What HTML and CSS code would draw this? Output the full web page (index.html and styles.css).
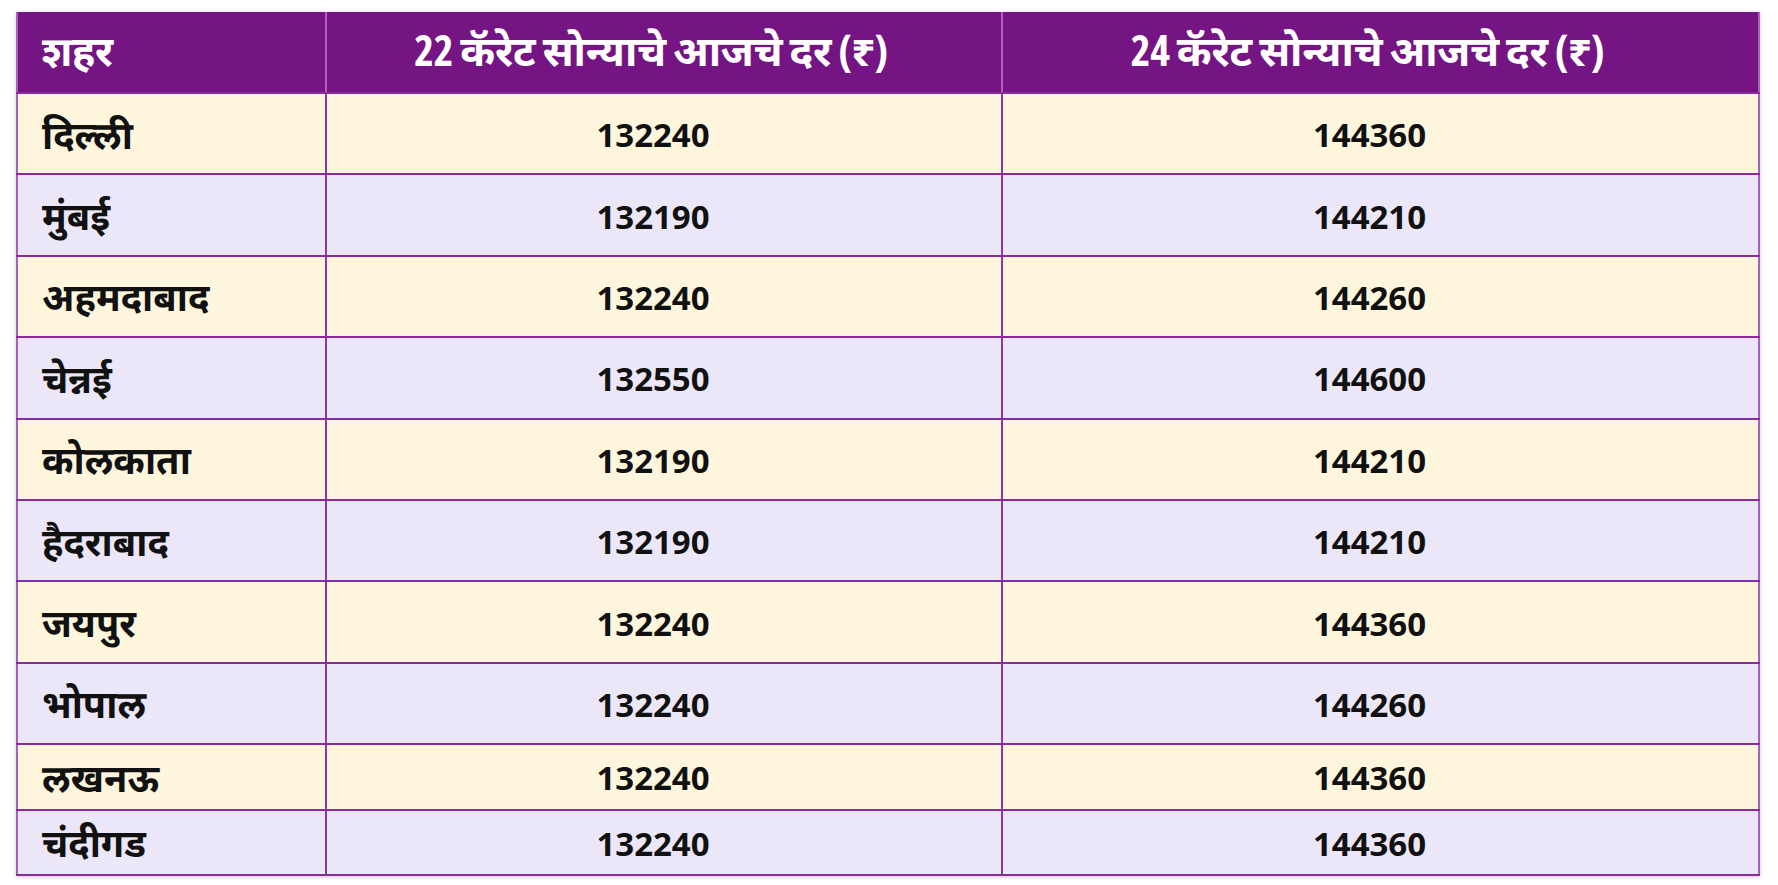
FILE: index.html
```html
<!DOCTYPE html>
<html lang="mr">
<head>
<meta charset="utf-8">
<title>सोन्याचे आजचे दर</title>
<link rel="stylesheet" href="styles.css">
</head>
<body>
<div class="page">
  <table class="rates">
    <colgroup>
      <col class="c-city">
      <col class="c-22">
      <col class="c-24">
    </colgroup>
    <thead>
      <tr>
        <th class="city">शहर</th>
        <th>22 कॅरेट सोन्याचे आजचे दर (₹)</th>
        <th>24 कॅरेट सोन्याचे आजचे दर (₹)</th>
      </tr>
    </thead>
    <tbody>
      <tr class="odd"><td class="city">दिल्ली</td><td>132240</td><td>144360</td></tr>
      <tr class="even"><td class="city">मुंबई</td><td>132190</td><td>144210</td></tr>
      <tr class="odd"><td class="city">अहमदाबाद</td><td>132240</td><td>144260</td></tr>
      <tr class="even"><td class="city">चेन्नई</td><td>132550</td><td>144600</td></tr>
      <tr class="odd"><td class="city">कोलकाता</td><td>132190</td><td>144210</td></tr>
      <tr class="even"><td class="city">हैदराबाद</td><td>132190</td><td>144210</td></tr>
      <tr class="odd"><td class="city">जयपुर</td><td>132240</td><td>144360</td></tr>
      <tr class="even"><td class="city">भोपाल</td><td>132240</td><td>144260</td></tr>
      <tr class="odd short"><td class="city">लखनऊ</td><td>132240</td><td>144360</td></tr>
      <tr class="even short"><td class="city">चंदीगड</td><td>132240</td><td>144360</td></tr>
    </tbody>
  </table>
</div>
</body>
</html>
```

FILE: styles.css
```css
html, body {
  margin: 0;
  padding: 0;
  background: #ffffff;
}

.page {
  padding: 12px 20px 9px 16px;
}

.rates {
  width: 1742px;
  border-collapse: collapse;
  table-layout: fixed;
  font-family: "Open Sans", "Noto Sans Devanagari", "Lohit Devanagari", "Mukta", "Hind", "FreeSans", "Noto Sans", sans-serif;
  font-weight: 700;
  color: #111111;
  box-shadow: 0 1px 4px rgba(90, 20, 110, 0.25);
  border-left: 2px solid #a463b8;
  border-right: 2px solid #a463b8;
}

.c-city { width: 309px; }
.c-22 { width: 676px; }
.c-24 { width: 757px; }

.rates thead tr {
  height: 81px;
  background: #741583;
}

.rates th {
  color: #ffffff;
  font-size: 42px;
  font-stretch: 80%;
  font-weight: 700;
  text-align: center;
  padding: 0 26px 0 0;
  border-right: 2px solid #a863bd;
  border-bottom: 2px solid #8a2a9c;
  letter-spacing: -0.3px;
}

.rates th:last-child,
.rates td:last-child {
  border-right: none;
}

.rates th.city {
  text-align: left;
  padding: 0 0 0 24px;
  font-size: 41px;
}

.rates tbody tr {
  height: 81.4px;
}

.rates tbody tr.short {
  height: 65.5px;
}

.rates tr.odd { background: #fdf6dd; }
.rates tr.even { background: #ece7f8; }

.rates td {
  font-size: 33px;
  text-align: center;
  padding: 2px 22px 0 0;
  border-right: 2px solid #8d3a9f;
  border-bottom: 2px solid #8a2a9c;
}

.rates td.city {
  text-align: left;
  padding: 5px 0 0 24px;
  font-size: 38px;
}
```
